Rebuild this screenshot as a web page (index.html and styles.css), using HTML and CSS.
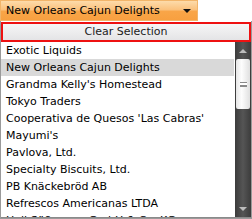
FILE: index.html
```html
<!DOCTYPE html>
<html lang="en">

<head>
    <meta charset="UTF-8">
    <title>Suppliers</title>
    <link rel="stylesheet" href="styles.css">
</head>

<body>
    <div class="combo">
        <span class="combo-text">New Orleans Cajun Delights</span>
        <span class="combo-arrow"></span>
    </div>
    <div class="popup">
        <div class="clear">Clear Selection</div>
        <div class="list-wrap">
            <ul class="list">
                <li>Exotic Liquids</li>
                <li class="selected">New Orleans Cajun Delights</li>
                <li>Grandma Kelly's Homestead</li>
                <li>Tokyo Traders</li>
                <li>Cooperativa de Quesos 'Las Cabras'</li>
                <li>Mayumi's</li>
                <li>Pavlova, Ltd.</li>
                <li>Specialty Biscuits, Ltd.</li>
                <li>PB Knäckebröd AB</li>
                <li>Refrescos Americanas LTDA</li>
                <li>Heli Süßwaren GmbH &amp; Co. KG</li>
            </ul>
            <div class="scrollbar">
                <div class="sb-btn"><span class="tri-up"></span></div>
                <div class="sb-thumb"><span class="grip"></span></div>
                <div class="sb-track"></div>
                <div class="sb-btn"><span class="tri-down"></span></div>
            </div>
        </div>
    </div>
</body>

</html>
```

FILE: styles.css
```css
html,
body {
    margin: 0;
    padding: 0;
}

body {
    width: 252px;
    height: 219px;
    overflow: hidden;
    background: #fff;
    font-family: "DejaVu Sans", Verdana, sans-serif;
    font-size: 11px;
    color: #000;
}

.combo {
    width: 198px;
    height: 21px;
    box-sizing: border-box;
    border: 1px solid #f2b56a;
    background: linear-gradient(#fddbaa, #fbc27e 45%, #f9a548 55%, #f8a040);
    display: flex;
    align-items: center;
    justify-content: space-between;
    padding: 0 6px 0 5px;
}

.combo-arrow {
    width: 0;
    height: 0;
    border-left: 4px solid transparent;
    border-right: 4px solid transparent;
    border-top: 4px solid #111;
}

.popup {
    width: 252px;
    height: 198px;
    box-sizing: border-box;
    border: 1px solid #9a9a9a;
    border-top: none;
    display: flex;
    flex-direction: column;
}

.clear {
    height: 20px;
    box-sizing: border-box;
    border: 2px solid #ee1111;
    background: linear-gradient(#f6f6f6, #e4e4e6);
    text-align: center;
    line-height: 16px;
    color: #222;
    margin-top: 1px;
}

.list-wrap {
    flex: 1;
    display: flex;
    overflow: hidden;
    border-bottom: 1px solid #8a8a8a;
}

.list {
    flex: 1;
    list-style: none;
    margin: 0;
    padding: 0;
    overflow: hidden;
}

.list li {
    height: 17px;
    line-height: 17px;
    padding-left: 5px;
    white-space: nowrap;
    margin-right: 1px;
}

.list li.selected {
    background: #d9d9d9;
}

.scrollbar {
    width: 16px;
    display: flex;
    flex-direction: column;
    background: linear-gradient(90deg, #3c3c3c, #555 50%, #3c3c3c);
}

.sb-btn {
    height: 17px;
    display: flex;
    align-items: center;
    justify-content: center;
}

.tri-up,
.tri-down {
    width: 0;
    height: 0;
    border-left: 4px solid transparent;
    border-right: 4px solid transparent;
}

.tri-up {
    border-bottom: 4px solid #bdbdbd;
}

.tri-down {
    border-top: 4px solid #bdbdbd;
}

.sb-thumb {
    height: 50px;
    margin: 0 1px;
    border-radius: 2px;
    background: linear-gradient(90deg, #e6e6e6, #fdfdfd 40%, #e0e0e0);
    display: flex;
    align-items: center;
    justify-content: center;
}

.grip {
    width: 7px;
    height: 5px;
    border-top: 1px solid #8a8a8a;
    border-bottom: 1px solid #8a8a8a;
    background: linear-gradient(#fff 2px, #8a8a8a 2px, #8a8a8a 3px, #fff 3px);
    box-sizing: border-box;
}

.sb-track {
    flex: 1;
}
```
